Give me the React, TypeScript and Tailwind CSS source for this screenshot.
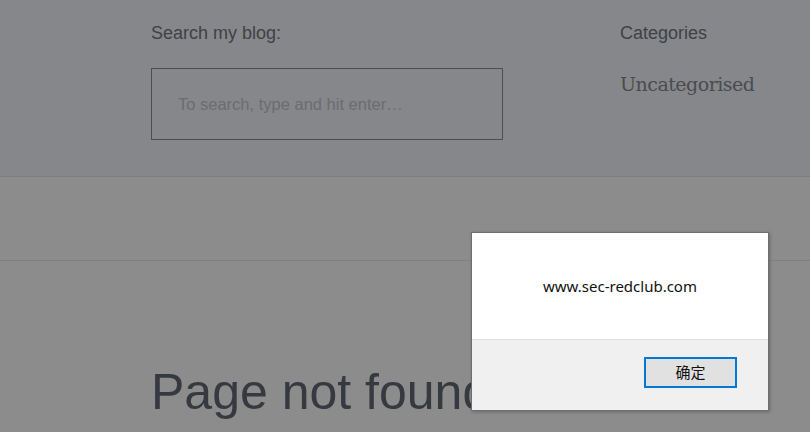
import React from "react";

export default function App() {
  return (
    <div className="relative w-[810px] h-[432px] overflow-hidden bg-[#8c8c8c] [font-family:'Liberation_Sans',Arial,sans-serif]">
      {/* top widget area */}
      <div className="h-[177px] bg-[#86878a] border-b border-[#7e7e7e] flex">
        <div className="ml-[151px] w-[352px] pt-[21px]">
          <div className="text-[18px] leading-[24px] text-[#3e4146]">Search my blog:</div>
          <div className="mt-[23px] h-[72px] border border-[#4c4d50] flex items-center pl-[26px]">
            <span className="text-[16.5px] text-[#6b6c6f]">To search, type and hit enter…</span>
          </div>
        </div>
        <div className="ml-[117px] pt-[21px]">
          <div className="text-[18px] leading-[24px] text-[#3e4146]">Categories</div>
          <div className="mt-[26px] text-[19px] leading-[26px] text-[#4a4b4f] [font-family:'DejaVu_Serif','Liberation_Serif',serif] tracking-[-0.5px]">
            Uncategorised
          </div>
        </div>
      </div>
      {/* middle band */}
      <div className="h-[84px] border-b border-[#808080]" />
      {/* page not found */}
      <div className="pl-[151px] pt-[103px]">
        <div className="text-[50px] leading-[56px] text-[#363a40] whitespace-nowrap">Page not found</div>
      </div>

      {/* alert dialog */}
      <div className="absolute left-[471px] top-[232px] w-[298px] h-[179px] bg-white border border-[#6e6e6e] shadow-[1px_1px_3px_rgba(0,0,0,0.25)] flex flex-col [font-family:'Noto_Sans','Noto_Sans_CJK_SC',sans-serif]">
        <div className="h-[107px] flex items-center justify-center pt-[1px] border-b border-[#dfdfdf]">
          <span className="text-[15px] text-[#111]">www.sec-redclub.com</span>
        </div>
        <div className="flex-1 bg-[#f0f0f0] flex justify-end items-start pt-[17px] pr-[31px]">
          <div className="w-[93px] h-[31px] border-2 border-[#0078d7] bg-[#e1e1e1] flex items-center justify-center text-[15px] text-[#111] [font-family:'Noto_Sans_CJK_SC',sans-serif]">
            确定
          </div>
        </div>
      </div>
    </div>
  );
}
